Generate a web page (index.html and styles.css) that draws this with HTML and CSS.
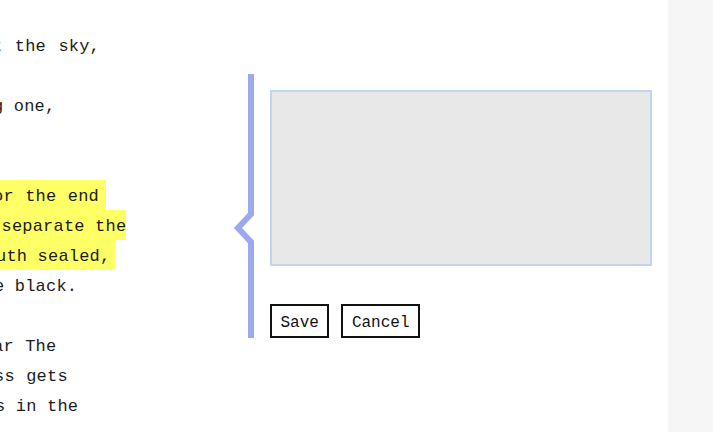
FILE: index.html
```html
<!DOCTYPE html>
<html>
<head>
<meta charset="utf-8">
<link rel="stylesheet" href="styles.css">
</head>
<body>
<div class="main">
  <div class="doc">
    <div class="line"><span class="t ln1">t the sky,</span></div>
    <div class="line"></div>
    <div class="line"><span class="t ln2">g one,</span></div>
    <div class="line"></div>
    <div class="line"></div>
    <div class="line"><span class="t hl ln3">or the end</span></div>
    <div class="line"><span class="t hl ln4">separate the</span></div>
    <div class="line"><span class="t hl ln5">uth sealed,</span></div>
    <div class="line"><span class="t ln6">e black.</span></div>
    <div class="line"></div>
    <div class="line"><span class="t ln7">ar The</span></div>
    <div class="line"><span class="t ln8">ss gets</span></div>
    <div class="line"><span class="t ln9">s in the</span></div>
  </div>
  <div class="thread">
    <div class="rail">
      <div class="rail-top"></div>
      <svg class="rail-notch" width="20" height="28" viewBox="0 0 20 28">
        <path d="M17 -3 L17 0 L4 14 L17 28 L17 31" fill="none" stroke="#9ca9ee" stroke-width="6" stroke-linejoin="miter"/>
      </svg>
      <div class="rail-bottom"></div>
    </div>
    <div class="card">
      <textarea class="input"></textarea>
      <div class="actions">
        <button class="btn btn-save">Save</button>
        <button class="btn btn-cancel">Cancel</button>
      </div>
    </div>
  </div>
</div>
<div class="sidebar"></div>
</body>
</html>
```
FILE: styles.css
```css
html, body {
  margin: 0;
  padding: 0;
  background: #ffffff;
}
body {
  display: flex;
  height: 432px;
  overflow: hidden;
  font-family: "Liberation Mono", "DejaVu Sans Mono", monospace;
  color: #1c1c1c;
}
.main {
  flex: 1;
  display: flex;
  align-items: flex-start;
}
.sidebar {
  width: 45px;
  background: #f6f6f6;
}
.doc {
  width: 234px;
  padding-top: 30px;
  overflow: hidden;
  font-size: 17px;
  letter-spacing: 0.2px;
}
.line {
  display: flex;
  height: 30px;
}
.t {
  white-space: pre;
  padding-top: 4px;
  line-height: 26px;
  flex: none;
}
.hl {
  background: #ffff66;
}
.ln1 { margin-left: -8px; word-spacing: 2px; }
.ln2 { margin-left: -7px; }
.ln3 { margin-left: -7px; word-spacing: 1px; padding-right: 7px; }
.ln4 { padding-left: 1.5px; }
.ln5 { margin-left: -4px; padding-right: 5px; }
.ln6 { margin-left: -6px; }
.ln7 { margin-left: -7px; word-spacing: 1px; }
.ln8 { margin-left: -6px; word-spacing: 1px; }
.ln9 { margin-left: -5px; }

.thread {
  flex: 1;
  display: flex;
  margin-top: 74px;
}
.rail {
  width: 20px;
  display: flex;
  flex-direction: column;
}
.rail-top {
  height: 140px;
  border-right: 6px solid #9ca9ee;
}
.rail-notch {
  display: block;
  overflow: visible;
  flex: none;
}
.rail-bottom {
  flex: 1;
  border-right: 6px solid #9ca9ee;
}
.card {
  flex: 1;
  padding: 16px 16px 0 16px;
  display: flex;
  flex-direction: column;
}
.input {
  display: block;
  box-sizing: border-box;
  width: 382px;
  height: 176px;
  margin: 0;
  background: #e8e8e8;
  border: 2px solid #c3d5ee;
  resize: none;
  outline: none;
}
.actions {
  display: flex;
  gap: 12px;
  margin-top: 38px;
}
.btn {
  box-sizing: border-box;
  height: 34px;
  margin: 0;
  padding: 3px 8.5px 0;
  background: #ffffff;
  border: 2px solid #111111;
  border-radius: 0;
  font-family: "Liberation Mono", "DejaVu Sans Mono", monospace;
  font-size: 16px;
  color: #111111;
}
```
